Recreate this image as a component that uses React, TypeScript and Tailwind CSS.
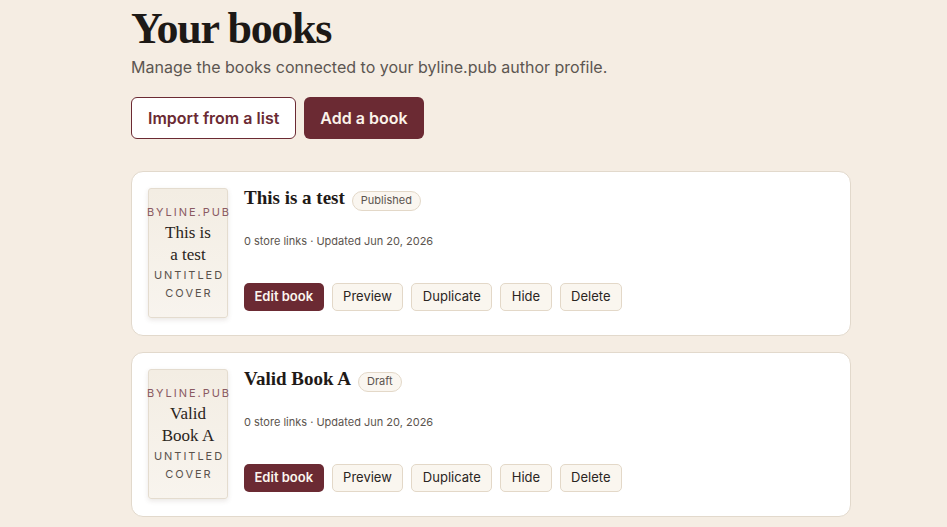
import React from 'react';

type Book = { title: string; coverLines: string[]; status: string; meta: string };

const books: Book[] = [
  { title: 'This is a test', coverLines: ['This is', 'a test'], status: 'Published', meta: '0 store links · Updated Jun 20, 2026' },
  { title: 'Valid Book A', coverLines: ['Valid', 'Book A'], status: 'Draft', meta: '0 store links · Updated Jun 20, 2026' },
];

const serif = "font-['Liberation_Serif',serif]";

function Cover({ lines }: { lines: string[] }) {
  return (
    <div className="w-[80px] h-[130px] shrink-0 rounded-[3px] border border-[#e4dccf] bg-gradient-to-b from-[#f3ede3] to-[#f8f4ee] shadow-[0_2px_5px_rgba(80,60,40,0.12)] flex flex-col items-center justify-center text-center">
      <div className="text-[11px] leading-[16px] tracking-[0.18em] text-[#8a5a62] whitespace-nowrap pl-[2px]">BYLINE.PUB</div>
      <div className={`${serif} mt-[2px] text-[17px] leading-[22px] text-[#2a2420]`}>
        {lines.map((l) => (
          <div key={l}>{l}</div>
        ))}
      </div>
      <div className="text-[11px] leading-[18px] tracking-[0.18em] text-[#5a524c] pl-[2px]">
        <div>UNTITLED</div>
        <div>COVER</div>
      </div>
    </div>
  );
}

function BookCard({ book }: { book: Book }) {
  const actions = ['Preview', 'Duplicate', 'Hide', 'Delete'];
  return (
    <div className="bg-white border border-[#e2d9cc] rounded-[12px] p-4 pb-[17px] flex gap-4">
      <Cover lines={book.coverLines} />
      <div className="flex flex-col">
        <div className="flex items-center gap-[7px] h-[24px] mt-[-2px]">
          <h3 className={`${serif} font-bold text-[19px] leading-[24px] text-[#1f1a17]`}>{book.title}</h3>
          <span className="h-[20px] px-2 mt-[5px] flex items-center rounded-full border border-[#e3d8c8] bg-[#faf6f0] text-[11px] text-[#5b544e]">
            {book.status}
          </span>
        </div>
        <p className="mt-[23px] text-[11px] leading-[16px] text-[#5b544e]">{book.meta}</p>
        <div className="mt-[34px] flex gap-2">
          <button className="h-[28px] px-[10.5px] rounded-[5px] bg-[#6b2a33] text-[13px] font-semibold text-[#fbf5ee]">
            Edit book
          </button>
          {actions.map((a) => (
            <button
              key={a}
              className="h-[28px] px-[10.5px] rounded-[5px] border border-[#e3d8c8] bg-[#faf6ef] text-[13px] text-[#2a2522]"
            >
              {a}
            </button>
          ))}
        </div>
      </div>
    </div>
  );
}

export default function App() {
  return (
    <div className="min-h-[527px] bg-[#f5ede3] font-['Inter',sans-serif] overflow-hidden">
      <div className="ml-[131px] w-[720px] pt-[5px]">
        <h1 className={`${serif} font-bold text-[44px] leading-[48px] tracking-[-0.03em] text-[#1d1916]`}>Your books</h1>
        <p className="mt-[2px] text-[16px] leading-[24px] text-[#5c5651]">
          Manage the books connected to your byline.pub author profile.
        </p>
        <div className="mt-[18px] flex gap-2">
          <button className="h-[42px] px-4 rounded-[6px] border border-[#6b2a33] bg-white text-[16px] font-semibold text-[#6b2a33]">
            Import from a list
          </button>
          <button className="h-[42px] px-4 rounded-[6px] bg-[#6b2a33] text-[16px] font-semibold text-[#fbf3ea]">
            Add a book
          </button>
        </div>
        <div className="mt-8 flex flex-col gap-4">
          {books.map((b) => (
            <BookCard key={b.title} book={b} />
          ))}
        </div>
      </div>
    </div>
  );
}
